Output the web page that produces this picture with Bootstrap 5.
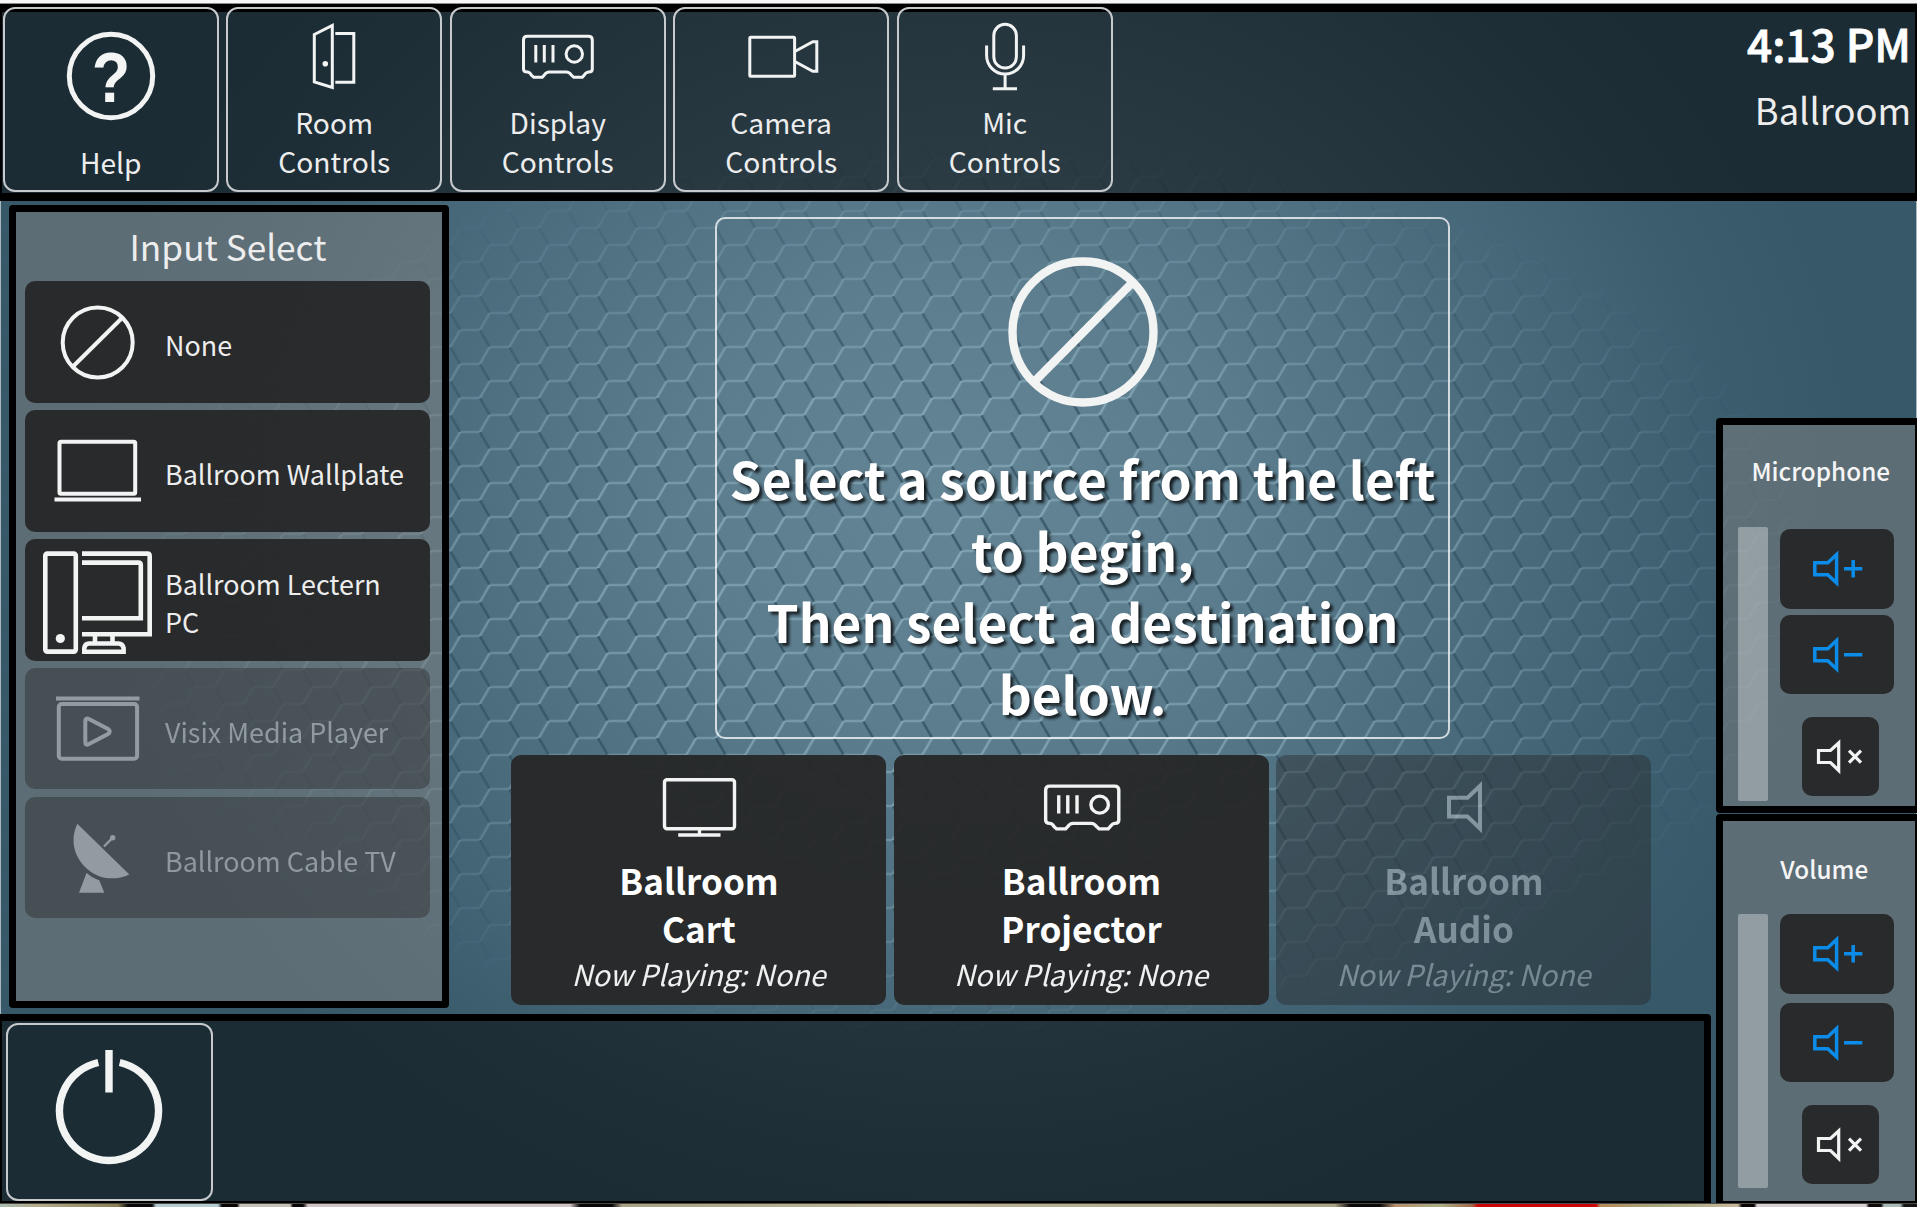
<!DOCTYPE html>
<html lang="en">
<head>
<meta charset="utf-8">
<meta name="viewport" content="width=device-width, initial-scale=1">
<title>Ballroom Control</title>
<link href="https://cdn.jsdelivr.net/npm/bootstrap@5.3.0/dist/css/bootstrap.min.css" rel="stylesheet">
<style>
body{width:1917px;height:1207px;overflow:hidden;font-family:"Noto Sans CJK SC","Noto Sans",sans-serif;color:#ededee;background:#365868;line-height:1}
svg{display:block;fill:none;stroke:#f2f3f3;flex:none}
.backdrop{top:0;left:0;z-index:-1}
.chrome-strip{height:4px;background:linear-gradient(#f7f7f7 3px,#8b8b8b 3px)}
.topbar{height:197px;border:solid #000;border-width:8px 2px;background:rgba(0,0,0,.5)}
.btn-panel{--bs-btn-color:#ededee;--bs-btn-bg:transparent;--bs-btn-border-color:#c6cacc;--bs-btn-border-radius:12px;--bs-btn-padding-x:0;--bs-btn-padding-y:0;--bs-btn-border-width:2px}
.top-buttons{margin:-5px 0 0 .7px;gap:7.5px}
.top-buttons .btn{width:216px;height:184.5px;font-size:28.2px;line-height:39px}
.top-buttons svg{width:212px;height:93px}
.help-label{margin-top:40px}
.clock{font-size:44.2px;font-weight:500;line-height:50px;color:#fff;margin-top:5.5px;-webkit-text-stroke:.8px #fff}
.room{font-size:36.3px;line-height:50px;margin-top:16.5px}
.clockbox{margin-right:4px}
.left-col{width:1711px}
.stage{height:812.5px}
.frame{border:7px solid #000;border-radius:4px;background:rgba(130,130,130,.5)}
.inputs{width:440px;height:802.5px;margin:4px 0 0 9px}
.inputs h2{font-size:35.2px;font-weight:400;line-height:64px;padding:2px 2px 0 0;margin:0 0 3.4px;text-align:center}
.source-list{gap:7.5px;padding:0 12.5px 0 9px}
.btn-dark-key{--bs-btn-color:#ededee;--bs-btn-bg:rgba(39,40,41,.97);--bs-btn-border-width:0;--bs-btn-border-radius:10px;--bs-btn-padding-x:0;--bs-btn-padding-y:0;--bs-btn-disabled-bg:#282829;--bs-btn-disabled-color:#d4d4d4;--bs-btn-disabled-opacity:.42}
.btn-dark-key:disabled svg{stroke:#dcdcdc}
.source{height:121.4px;font-size:26.9px;line-height:37.5px}
.source svg{width:141px;height:121px;stroke-width:4}
.source span{padding-top:6px;margin-left:-1px}
.center-col{margin-left:62px;width:1140px}
.prompt{width:735px;height:521.5px;margin:16px 0 0 204px;border:2px solid rgba(255,255,255,.75);border-radius:10px;color:#fff;font-size:51.4px;font-weight:700;line-height:71.7px;text-align:center;white-space:nowrap;text-shadow:3px 3px 3px rgba(0,0,0,.75)}
.prompt svg{width:150px;height:150px;margin:38px auto 35px}
.dests{gap:7.5px;margin-top:16.5px}
.dest{width:375px;height:249.5px;font-size:35.1px;font-weight:700;line-height:48px;--bs-btn-color:#fff}
.dest svg{width:375px;height:100.5px;stroke-width:3.4}
.dest span{padding-left:1px}
.dest em{display:block;font-size:28.9px;font-weight:400;line-height:40px;margin-top:1px;opacity:.93}
.bottombar{height:189.5px;border:solid #000;border-width:7px 7px 2px 2px;border-radius:0 4px 0 0;background:rgba(0,0,0,.5)}
.power{width:207px;height:178px;margin:2px 0 0 4px}
.right-col{width:201.5px;margin:217px 0 0 4.5px}
.level{border-right-width:2px;border-radius:4px 0 0 4px}
.level h3{font-size:24.3px;font-weight:500;line-height:40px;margin:0;color:#f5f5f5;text-align:center}
.mic{height:394.5px}
.vol{height:389px;margin-top:1.5px;border-bottom-width:2px;border-radius:4px 0 0 0}
.slider{width:30px;height:273.5px;border-radius:2px;background:rgba(255,255,255,.33)}
.keys{margin-left:12px}
.key{width:114px;height:79.5px}
.key svg{width:114px;height:79px;stroke:#0c8ce9;stroke-width:3.5}
.mute{width:76.5px;height:79.5px;margin-left:22px}
.mute svg{width:76px;height:79px;stroke-width:3.2}
.desk{height:3.5px;border-top:1px solid #4a4a48;background:linear-gradient(90deg,#a9bab2 0,#b4ac8c 35px,#8b8054 118px,#0a0808 128px 152px,#b4cbd0 156px 218px,#0a0606 222px 237px,#c6c0b6 240px 290px,#080606 293px 303px,#d2c4c6 308px 570px,#0a0808 580px 612px,#a8a184 622px,#bfb595 900px,#aaa283 1335px,#0c0a0a 1350px 1380px,#b78d6c 1395px,#a8ae86 1440px,#a1664a 1472px,#cc0606 1478px 1596px,#b58958 1600px,#a5a57f 1660px,#c8b99a 1738px,#0a0606 1742px 1754px,#d5d0d4 1757px 1866px,#100b0b 1869px 1881px,#a9bab9 1884px 1900px,#151515 1904px)}
</style>
</head>
<body class="position-relative">
<svg class="backdrop position-absolute" width="1917" height="1207" stroke="none" aria-hidden="true">
  <defs>
    <radialGradient id="glow" gradientUnits="userSpaceOnUse" cx="0" cy="0" r="1" gradientTransform="translate(960 500) scale(900 780)">
      <stop offset="0" stop-color="#648595"/><stop offset=".3" stop-color="#5c7d8e"/><stop offset=".6" stop-color="#4b6c7d"/><stop offset=".85" stop-color="#3b5d6e"/><stop offset="1" stop-color="#365868"/>
    </radialGradient>
    <radialGradient id="fade" gradientUnits="userSpaceOnUse" cx="0" cy="0" r="1" gradientTransform="translate(960 590) scale(880 460)">
      <stop offset="0" stop-color="#fff"/><stop offset=".45" stop-color="#ddd"/><stop offset=".75" stop-color="#777"/><stop offset="1" stop-color="#000"/>
    </radialGradient>
    <!-- one cell holds two offset hexagon columns -->
    <pattern id="hex" width="59" height="34" patternUnits="userSpaceOnUse" x="440.5" y="330">
      <g fill="none" stroke-width="2.4">
        <path d="M39.3 0L49.2 17M9.8 17L19.7 34" stroke="#1f3c4c" stroke-opacity=".65"/>
        <path d="M19.7 0L9.8 17M49.2 17L39.3 34" stroke="#a5cbd8" stroke-opacity=".55"/>
        <path d="M19.7 0H39.3M19.7 34H39.3M0 17H9.8M49.2 17H59" stroke="#a5cbd8" stroke-opacity=".42"/>
      </g>
    </pattern>
    <mask id="m"><rect width="1917" height="1207" fill="url(#fade)"/></mask>
  </defs>
  <rect width="1917" height="1207" fill="url(#glow)"/>
  <rect width="1917" height="1207" fill="url(#hex)" mask="url(#m)"/>
</svg>

<div class="chrome-strip"></div>
<header class="topbar d-flex justify-content-between">
  <nav class="top-buttons d-flex">
    <button class="btn btn-panel d-flex flex-column align-items-center">
      <svg viewBox="4.5 9 212 93" style="overflow:visible"><circle cx="110.5" cy="76" r="41.7" stroke-width="5"/><text transform="translate(110.5 102) scale(.9 1)" text-anchor="middle" font-family="Liberation Sans" font-weight="700" font-size="70" fill="#f4f5f5" stroke="none">?</text></svg>
      <span class="help-label">Help</span>
    </button>
    <button class="btn btn-panel d-flex flex-column align-items-center">
      <svg viewBox="228.200 9 212 93" stroke-width="3"><path d="M314.5 34.5L332.5 25.5V87.5L314.5 82ZM335.5 33.5H354V82.3H335.5"/><circle cx="325.5" cy="63.7" r="2.8" fill="#f2f3f3" stroke="none"/></svg>
      <span>Room<br>Controls</span>
    </button>
    <button class="btn btn-panel d-flex flex-column align-items-center">
      <svg viewBox="451.700 9 212 93" stroke-width="3"><path d="M527 36.2H588Q592 36.2 592 40V69Q592 72 588.5 72Q586 72 584 75L582 77.3H573.5L571 75Q569 72 566 72H549Q546 72 544 75L542 77.3H533.5L531 75Q529.5 72 527 72Q523.2 72 523.2 69V40Q523.2 36.2 527 36.2ZM535.5 45V62.5M544 45V62.5M552.7 45V62.5"/><circle cx="574" cy="54" r="8.2"/></svg>
      <span>Display<br>Controls</span>
    </button>
    <button class="btn btn-panel d-flex flex-column align-items-center">
      <svg viewBox="675.200 9 212 93" stroke-width="3"><rect x="750" y="37.3" width="44.8" height="39" rx="1"/><path d="M795 51.5L813 41.8H817V71.3H813L795 61.5"/></svg>
      <span>Camera<br>Controls</span>
    </button>
    <button class="btn btn-panel d-flex flex-column align-items-center">
      <svg viewBox="898.700 9 212 93" stroke-width="3"><rect x="993.5" y="24.3" width="22.6" height="43.8" rx="11.3"/><path d="M986.3 45.5V55.5A18.5 18.5 0 0 0 1023.3 55.5V45.5M1004.8 74V88M992.5 88.7H1016.7"/></svg>
      <span>Mic<br>Controls</span>
    </button>
  </nav>
  <div class="clockbox text-end">
    <div class="clock">4:13 PM</div>
    <div class="room">Ballroom</div>
  </div>
</header>

<main class="d-flex">
  <div class="left-col d-flex flex-column">
    <div class="stage d-flex">
      <aside class="frame inputs">
        <h2>Input Select</h2>
        <div class="source-list d-grid">
          <button class="btn btn-dark-key source d-flex align-items-center text-start">
            <svg viewBox="0 0 141 121"><circle cx="72.7" cy="60.5" r="35"/><path d="M48 84.5L97 36"/></svg><span>None</span></button>
          <button class="btn btn-dark-key source d-flex align-items-center text-start">
            <svg viewBox="0 0 141 121"><rect x="34.5" y="31.8" width="75.7" height="52" rx="1.5"/><path d="M29.5 89.5H116"/></svg><span>Ballroom Wallplate</span></button>
          <button class="btn btn-dark-key source d-flex align-items-center text-start">
            <svg viewBox="0 0 141 121" style="stroke-width:4.6"><rect x="20.3" y="14.6" width="30.5" height="98" rx="2"/><circle cx="35.3" cy="99.5" r="4.6" fill="#f2f3f3" stroke="none"/><path d="M57 14.6H122.5Q124.7 14.6 124.7 17V95.3H57M57 23.6H113.5Q115.8 23.6 115.8 26V79.3H57M70 96V104M87.5 96V104M59.3 112.8V109Q60 104.5 64 104.5H93.5Q97.5 104.5 98.6 109V112.8Z"/></svg><span>Ballroom Lectern<br>PC</span></button>
          <button class="btn btn-dark-key source d-flex align-items-center text-start" disabled>
            <svg viewBox="0 0 141 121"><path d="M31 30.6H114.5"/><rect x="33.8" y="36" width="78.3" height="54.8" rx="3"/><path d="M60.3 53Q60.3 49.5 64 51L83 61Q86.5 63.5 83 66L64 76Q60.3 78 60.3 74Z"/></svg><span>Visix Media Player</span></button>
          <button class="btn btn-dark-key source d-flex align-items-center text-start" disabled>
            <svg viewBox="0 0 141 121"><g fill="#dcdcdc" stroke="none"><path d="M52.3 26.7L104.3 77.4C92 83 77 83 65.5 74.5C50 63 44 45 52.3 26.7ZM61.5 76L54 95.7H79.3L74.3 83.4Q67 81 61.5 76Z"/><circle cx="87.7" cy="40.7" r="2.7"/></g><path d="M79 49.5L87.7 40.7" stroke-width="2.4"/></svg><span>Ballroom Cable TV</span></button>
        </div>
      </aside>
      <section class="center-col">
        <div class="prompt">
          <svg viewBox="0 0 150 150" stroke-width="8.4"><circle cx="75" cy="75" r="70.5"/><path d="M27 124L124 26"/></svg>
          Select a source from the left<br>to begin,<br>Then select a destination<br>below.
        </div>
        <div class="dests d-flex">
          <button class="btn btn-dark-key dest d-flex flex-column align-items-center">
            <svg viewBox="511 755 375 100.5"><rect x="664.5" y="779.7" width="70" height="49" rx="2.5"/><path d="M699.5 829V835M678.2 835H720.5"/></svg>
            <span>Ballroom<br>Cart</span><em>Now Playing: None</em></button>
          <button class="btn btn-dark-key dest d-flex flex-column align-items-center">
            <svg viewBox="894 755 375 100.5"><g transform="translate(489.5 748.5) scale(1.063 1.04)" stroke-width="3.2"><path d="M527 36.2H588Q592 36.2 592 40V69Q592 72 588.5 72Q586 72 584 75L582 77.3H573.5L571 75Q569 72 566 72H549Q546 72 544 75L542 77.3H533.5L531 75Q529.5 72 527 72Q523.2 72 523.2 69V40Q523.2 36.2 527 36.2ZM535.5 45V62.5M544 45V62.5M552.7 45V62.5"/><circle cx="574" cy="54" r="8.2"/></g></svg>
            <span>Ballroom<br>Projector</span><em>Now Playing: None</em></button>
          <button class="btn btn-dark-key dest d-flex flex-column align-items-center" disabled>
            <svg viewBox="1276 755 375 100.5" style="stroke-width:4"><path d="M1449 797.8H1467.5L1480 786V828.5L1467.5 816.5H1449Z"/></svg>
            <span>Ballroom<br>Audio</span><em>Now Playing: None</em></button>
        </div>
      </section>
    </div>
    <footer class="bottombar">
      <button class="btn btn-panel power" aria-label="Power">
        <svg width="202" height="173" viewBox="8 1025 202 173" stroke-width="7.4"><path d="M98.3 1062.5A49.6 49.6 0 1 0 119.7 1062.5M109 1050V1092.5"/></svg>
      </button>
    </footer>
  </div>
  <aside class="right-col">
    <section class="frame level mic">
      <h3 style="padding:26px 0 36px 4px">Microphone</h3>
      <div class="d-flex" style="padding-left:15.5px">
        <div class="slider"></div>
        <div class="keys" style="padding-top:2px">
          <button class="btn btn-dark-key key d-block" aria-label="Microphone up"><svg viewBox="0 0 114 79"><path d="M34.8 33.7H47.8L56.6 25.5V54L47.8 45.7H34.8ZM64 39.7H82.3M73.2 31V48.5"/></svg></button>
          <button class="btn btn-dark-key key d-block" aria-label="Microphone down" style="margin-top:6px"><svg viewBox="0 0 114 79"><path d="M34.8 33.7H47.8L56.6 25.5V54L47.8 45.7H34.8ZM64 39.7H82.3"/></svg></button>
          <button class="btn btn-dark-key mute d-block" aria-label="Mute microphone" style="margin-top:22.5px"><svg viewBox="0 0 76 79"><path d="M16.5 33.5H28.5L36.7 26V53.5L28.5 45.5H16.5ZM47 33.7L59 45.7M59 33.7L47 45.7"/></svg></button>
        </div>
      </div>
    </section>
    <section class="frame level vol">
      <h3 style="padding:27.5px 0 25.5px 11px">Volume</h3>
      <div class="d-flex" style="padding-left:15.5px">
        <div class="slider"></div>
        <div class="keys">
          <button class="btn btn-dark-key key d-block" aria-label="Volume up"><svg viewBox="0 0 114 79"><path d="M34.8 33.7H47.8L56.6 25.5V54L47.8 45.7H34.8ZM64 39.7H82.3M73.2 31V48.5"/></svg></button>
          <button class="btn btn-dark-key key d-block" aria-label="Volume down" style="margin-top:9px"><svg viewBox="0 0 114 79"><path d="M34.8 33.7H47.8L56.6 25.5V54L47.8 45.7H34.8ZM64 39.7H82.3"/></svg></button>
          <button class="btn btn-dark-key mute d-block" aria-label="Mute volume" style="margin-top:22.5px"><svg viewBox="0 0 76 79"><path d="M16.5 33.5H28.5L36.7 26V53.5L28.5 45.5H16.5ZM47 33.7L59 45.7M59 33.7L47 45.7"/></svg></button>
        </div>
      </div>
    </section>
  </aside>
</main>
<div class="desk"></div>
<script src="https://cdn.jsdelivr.net/npm/bootstrap@5.3.0/dist/js/bootstrap.bundle.min.js"></script>
</body>
</html>
